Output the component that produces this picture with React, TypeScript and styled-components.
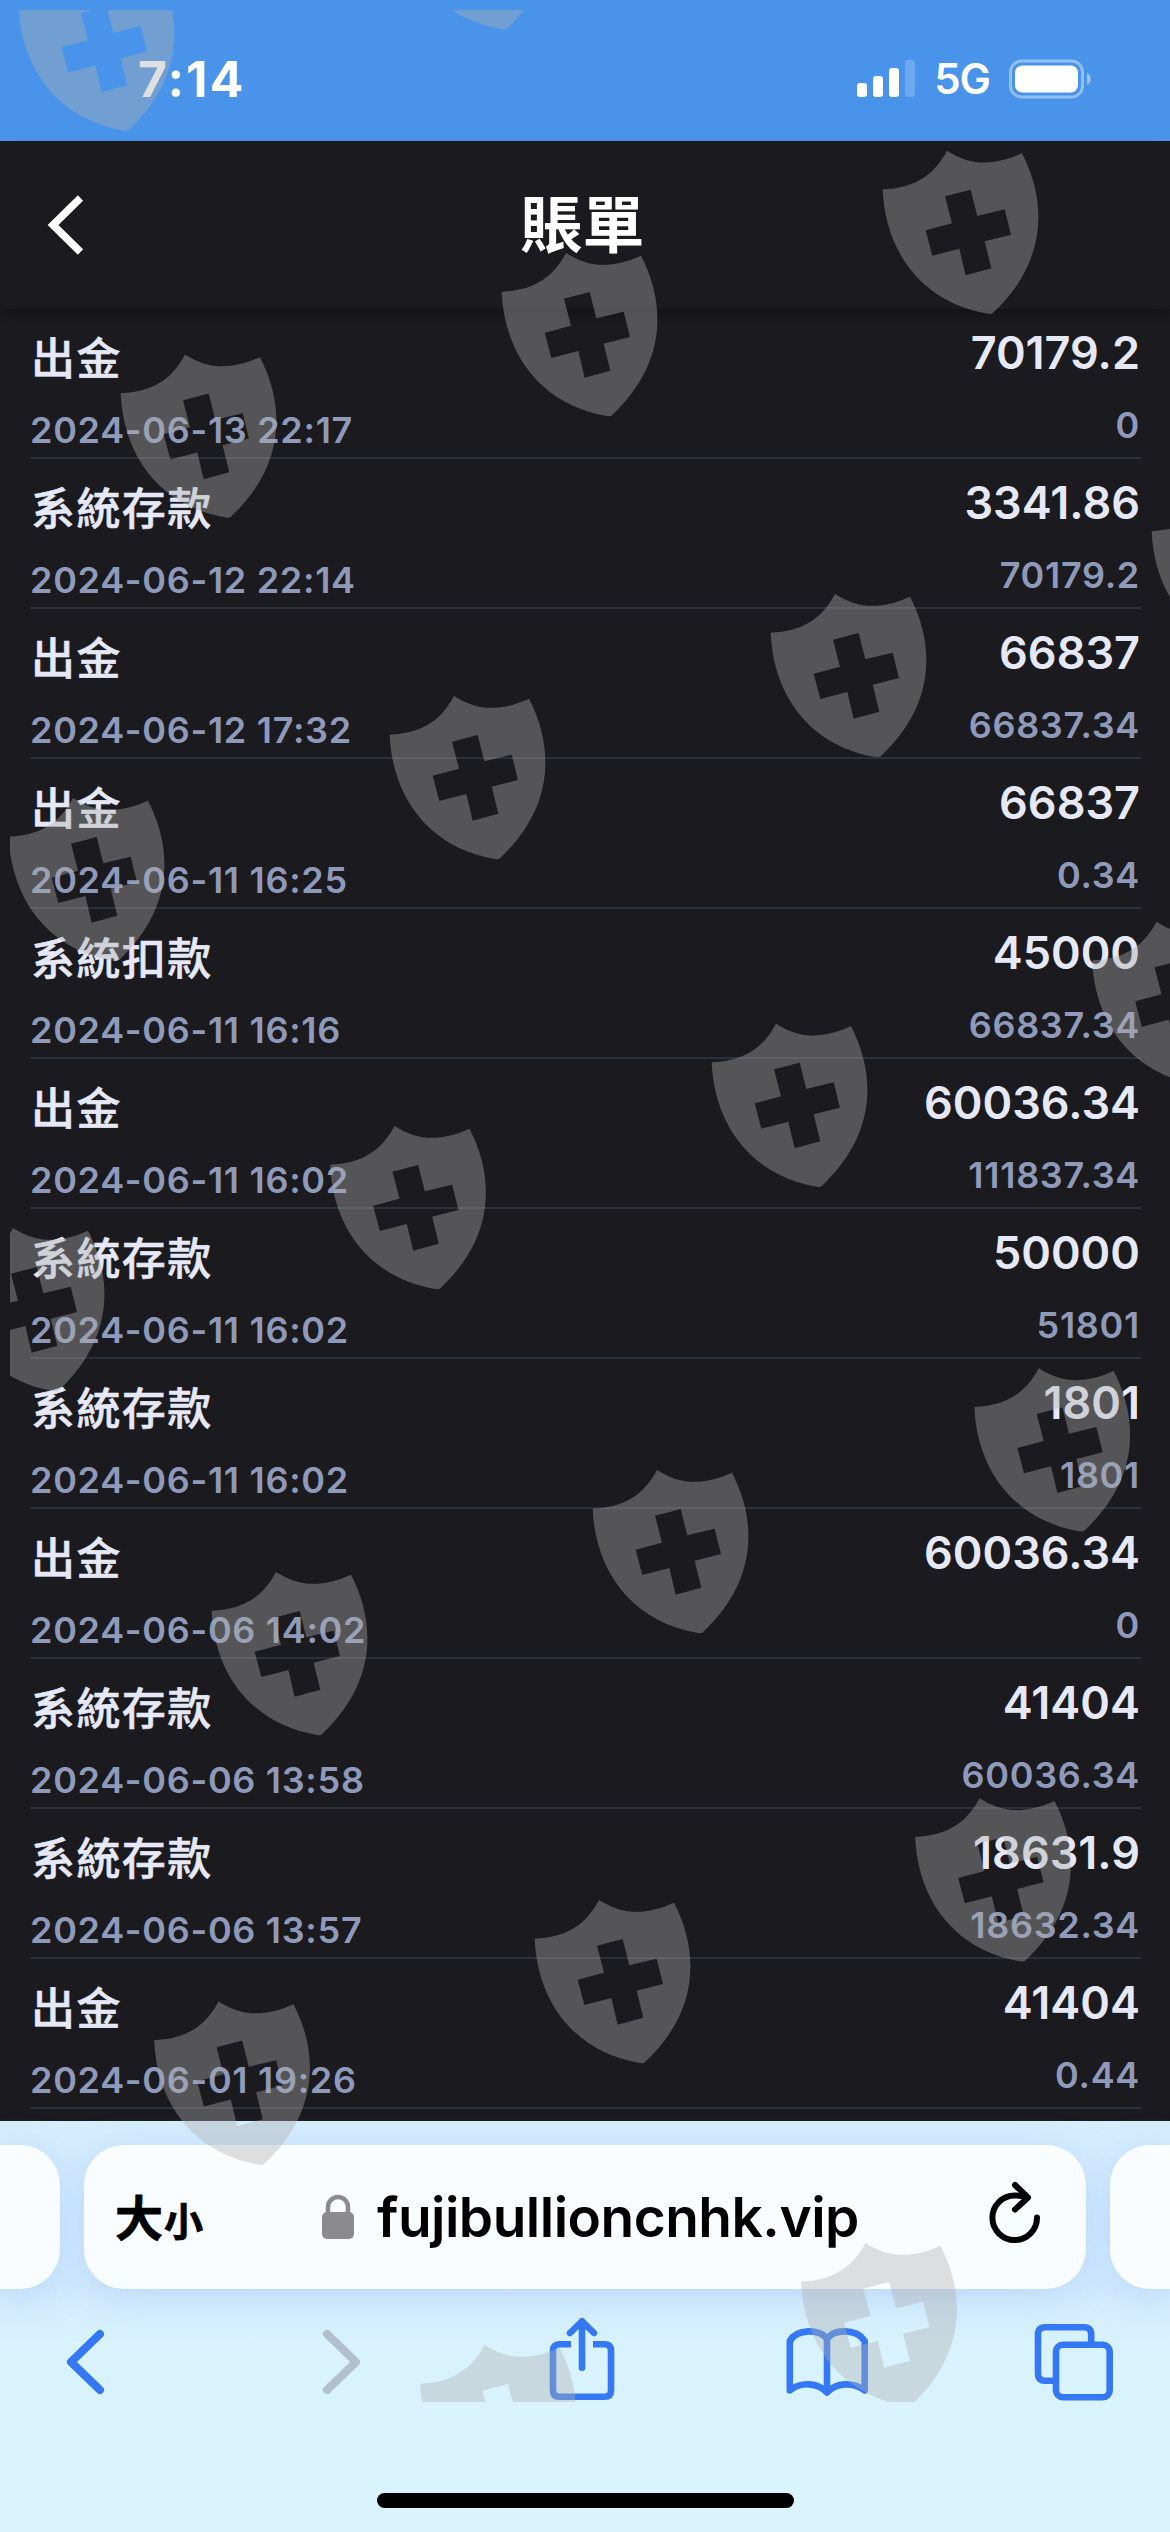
import styled, { createGlobalStyle } from "styled-components";

const colors = {
  STATUS_BLUE: "#4994ea",
  PAGE: "#1a1a1f",
  WHITE: "#ffffff",
  TEXT: "#e6e9f5",
  MUTED: "#8f9aba",
  LINE: "#2a313a",
  LINK: "#3478f6",
  DISABLED: "#b1bfce",
  CARD: "#fafdff",
};

const fonts = {
  latin: `Inter, "Noto Sans CJK TC", sans-serif`,
  cjk: `"Noto Sans CJK TC", Inter, sans-serif`,
};

const GlobalStyle = createGlobalStyle`
  * {
    box-sizing: border-box;
  }
  body {
    margin: 0;
    background-color: ${colors.PAGE};
  }
`;

const S = {
  Screen: styled.div`
    position: relative;
    display: flex;
    flex-direction: column;
    width: 1170px;
    height: 2532px;
    overflow: hidden;
    background-color: ${colors.PAGE};
    font-family: ${fonts.latin};
  `,
  StatusBar: styled.div`
    display: flex;
    align-items: center;
    justify-content: space-between;
    flex: none;
    height: 141px;
    padding: 16px 78px 0 138px;
    background-color: ${colors.STATUS_BLUE};
    color: ${colors.WHITE};
  `,
  Time: styled.span`
    font-size: 50px;
    line-height: 60px;
    font-weight: 700;
    letter-spacing: 2px;
  `,
  StatusIcons: styled.div`
    display: flex;
    align-items: center;
    gap: 19px;
  `,
  Network: styled.span`
    font-size: 42px;
    line-height: 48px;
    font-weight: 600;
    letter-spacing: -1px;
    padding-top: 1px;
  `,
  Header: styled.header`
    position: relative;
    z-index: 1;
    display: grid;
    grid-template-columns: 100px 1fr 105px;
    align-items: center;
    flex: none;
    height: 168px;
    background-color: ${colors.PAGE};
    box-shadow: 0 6px 12px -2px rgba(0, 0, 0, 0.3);
  `,
  BackButton: styled.button`
    display: flex;
    padding: 0 0 0 44px;
    border: 0;
    background: none;
  `,
  Title: styled.h1`
    margin: 0;
    padding-bottom: 9px;
    text-align: center;
    color: ${colors.WHITE};
    font-family: ${fonts.cjk};
    font-size: 62px;
    line-height: 90px;
    font-weight: 700;
  `,
  List: styled.ul`
    flex: none;
    height: 1812px;
    margin: 0;
    padding: 0 29px 0 30px;
    list-style: none;
  `,
  Row: styled.li`
    display: flex;
    justify-content: space-between;
    height: 150px;
    border-bottom: 2px solid ${colors.LINE};
  `,
  Info: styled.div`
    display: flex;
    flex-direction: column;
    gap: 25px;
    padding-top: 20px;
  `,
  Kind: styled.span`
    padding-left: 1px;
    color: ${colors.TEXT};
    font-family: ${fonts.cjk};
    font-size: 44px;
    line-height: 54px;
    font-weight: 500;
    letter-spacing: 1.4px;
    -webkit-text-stroke: 0.5px currentColor;
  `,
  Values: styled.div`
    display: flex;
    flex-direction: column;
    align-items: flex-end;
    gap: 23px;
    padding-top: 17px;
    padding-right: 1px;
  `,
  Amount: styled.span`
    color: ${colors.TEXT};
    font-size: 45px;
    line-height: 54px;
    font-weight: 600;
  `,
  Small: styled.span`
    color: ${colors.MUTED};
    font-size: 36px;
    line-height: 44px;
    font-weight: 560;
    letter-spacing: 0.7px;
  `,
  Browser: styled.footer`
    display: flex;
    flex-direction: column;
    flex: 1;
    padding-top: 24px;
    background: linear-gradient(#d5eefe, #d2ebfe 40%, #d8f3fe 55%, #daf4fe);
  `,
  Tabs: styled.div`
    display: grid;
    grid-template-columns: 60px 1002px 60px;
    gap: 24px;
    height: 144px;
  `,
  Tab: styled.div<{ $side?: "left" | "right" }>`
    display: flex;
    align-items: center;
    padding: ${({ $side }) => ($side ? "0" : "0 44px 0 31px")};
    border-radius: ${({ $side }) =>
      $side === "left" ? "0 40px 40px 0" : $side === "right" ? "40px 0 0 40px" : "40px"};
    background-color: ${colors.CARD};
    box-shadow: 0 6px 36px rgba(150, 180, 245, 0.36);
  `,
  TextSize: styled.span`
    display: flex;
    align-items: baseline;
    width: 92px;
    font-family: ${fonts.cjk};
    font-size: 48px;
    line-height: 60px;
    font-weight: 700;
    -webkit-text-stroke: 0.8px #000;
    small {
      margin-left: 1px;
      font-size: 39px;
    }
  `,
  Address: styled.div`
    display: flex;
    align-items: center;
    gap: 22px;
    margin-left: 114px;
    flex: 1;
    color: #000;
    font-size: 55px;
    line-height: 66px;
    font-weight: 580;
    letter-spacing: -0.5px;
  `,
  Reload: styled.svg`
    margin-bottom: 12px;
  `,
  Toolbar: styled.nav`
    display: grid;
    grid-template-columns: 255px 231px 239px 245px 84px;
    align-items: center;
    height: 116px;
    margin-top: 15px;
    padding-left: 60px;
    color: ${colors.LINK};
  `,
  HomeIndicator: styled.div`
    width: 417px;
    height: 15px;
    margin: 73px auto 0;
    border-radius: 8px;
    background-color: #000;
  `,
  // Sits above everything, starts 10px in from the top-left corner
  Watermark: styled.div`
    position: absolute;
    z-index: 2;
    top: 10px;
    left: 10px;
    right: 0;
    bottom: 130px;
    overflow: hidden;
    pointer-events: none;
    svg {
      display: block;
    }
  `,
};

const records = [
  { kind: "出金", date: "2024-06-13 22:17", amount: "70179.2", balance: "0" },
  { kind: "系統存款", date: "2024-06-12 22:14", amount: "3341.86", balance: "70179.2" },
  { kind: "出金", date: "2024-06-12 17:32", amount: "66837", balance: "66837.34" },
  { kind: "出金", date: "2024-06-11 16:25", amount: "66837", balance: "0.34" },
  { kind: "系統扣款", date: "2024-06-11 16:16", amount: "45000", balance: "66837.34" },
  { kind: "出金", date: "2024-06-11 16:02", amount: "60036.34", balance: "111837.34" },
  { kind: "系統存款", date: "2024-06-11 16:02", amount: "50000", balance: "51801" },
  { kind: "系統存款", date: "2024-06-11 16:02", amount: "1801", balance: "1801" },
  { kind: "出金", date: "2024-06-06 14:02", amount: "60036.34", balance: "0" },
  { kind: "系統存款", date: "2024-06-06 13:58", amount: "41404", balance: "60036.34" },
  { kind: "系統存款", date: "2024-06-06 13:57", amount: "18631.9", balance: "18632.34" },
  { kind: "出金", date: "2024-06-01 19:26", amount: "41404", balance: "0.44" },
];

const shields = [
  [83, -32.5],
  [461, -134],
  [947, 150.7],
  [566, 253],
  [185, 354.5],
  [1216, 492.5],
  [835, 594],
  [454, 696],
  [73, 798],
  [1156.5, 921.7],
  [776, 1023.7],
  [394.5, 1126],
  [13, 1228],
  [1038.7, 1368.3],
  [657, 1470],
  [276, 1572],
  [979.5, 1798.3],
  [599, 1900],
  [218.5, 2001.5],
  [865.5, 2243],
  [484.5, 2345],
];

function Watermark() {
  return (
    <S.Watermark>
      <svg width="1160" height="2392" viewBox="10 10 1160 2392" fill="rgba(176,176,174,0.4)">
        {shields.map(([x, y]) => (
          <path
            key={`${x}-${y}`}
            transform={`translate(${x} ${y}) scale(0.3333) translate(-261 -62)`}
            fillRule="evenodd"
            d="M68 178C160 174 220 140 261 62C335 110 405 106 486 70C564 220 560 400 396 551L388 552C190 520 76 370 68 178ZM255 199L276 280L197 301L217 377L298 356L317 436L394 415L374 334L453 314L434 238L352 258L332 179Z"
          />
        ))}
      </svg>
    </S.Watermark>
  );
}

function Signal() {
  return (
    <svg width="58" height="40" viewBox="0 0 58 40" fill="#fff">
      <rect x="0" y="24" width="10" height="14" rx="3" />
      <rect x="16" y="17" width="10" height="21" rx="3" />
      <rect x="32" y="9" width="10" height="29" rx="3" />
      <rect x="48" y="1" width="10" height="37" rx="3" opacity="0.2" />
    </svg>
  );
}

function Battery() {
  return (
    <svg width="83" height="40" viewBox="0 0 83 40" fill="#fff">
      <rect x="1.5" y="2" width="72" height="36" rx="11" fill="none" stroke="#fff" strokeOpacity="0.4" strokeWidth="3" />
      <rect x="6" y="6.5" width="63" height="27" rx="7" />
      <path d="M78 14c5 2 5 10 0 12z" opacity="0.45" />
    </svg>
  );
}

function Toolbar() {
  return (
    <S.Toolbar>
      <svg width="52" height="80" viewBox="0 0 52 80" fill="none" stroke="currentColor" strokeWidth="8" strokeLinecap="round" strokeLinejoin="round">
        <path d="M40 12L11 40L40 68" />
      </svg>
      <svg width="52" height="80" viewBox="0 0 52 80" fill="none" stroke={colors.DISABLED} strokeWidth="8" strokeLinecap="round" strokeLinejoin="round">
        <path d="M12 12L41 40L12 68" />
      </svg>
      <svg width="72" height="92" viewBox="0 0 72 92" fill="none" stroke="currentColor" strokeWidth="6.6" strokeLinecap="round" strokeLinejoin="round">
        <path d="M36 51.700V5.300M24 17L36 5.300L48 17" />
        <path
          strokeLinecap="butt"
          d="M25 28.300H13.500Q7 28.300 7 34.800V74.200Q7 80.700 13.500 80.700H58.500Q65 80.700 65 74.200V34.800Q65 28.300 58.500 28.300H47"
        />
      </svg>
      <svg width="84" height="84" viewBox="0 0 84 84" fill="none" stroke="currentColor" strokeWidth="6.6" strokeLinecap="round" strokeLinejoin="round">
        <path d="M42 19C35 8.500 12 8.500 4.800 21V70.500C16 61.500 33 62.500 42 72.500C51 62.500 68 61.500 79.700 70.500V21C72 8.500 49 8.500 42 19V72" />
      </svg>
      <svg width="84" height="84" viewBox="0 0 84 84" fill="none" stroke="currentColor" strokeWidth="6.6">
        <rect x="26" y="24.800" width="53.700" height="52.400" rx="7" />
        <path d="M61.200 24.800V14.300Q61.200 7.300 54.200 7.300H15Q8 7.300 8 14.300V53.700Q8 60.700 15 60.700H26" />
      </svg>
    </S.Toolbar>
  );
}

function App() {
  return (
    <S.Screen>
      <GlobalStyle />
      <S.StatusBar>
        <S.Time>7:14</S.Time>
        <S.StatusIcons>
          <Signal />
          <S.Network>5G</S.Network>
          <Battery />
        </S.StatusIcons>
      </S.StatusBar>
      <S.Header>
        <S.BackButton aria-label="back">
          <svg width="44" height="64" viewBox="0 0 44 64" fill="none" stroke="#fff" strokeWidth="7.5">
            <path d="M36.500 5L9 32L36.500 59" />
          </svg>
        </S.BackButton>
        <S.Title>賬單</S.Title>
      </S.Header>
      <S.List>
        {records.map(({ kind, date, amount, balance }) => (
          <S.Row key={date + amount}>
            <S.Info>
              <S.Kind>{kind}</S.Kind>
              <S.Small>{date}</S.Small>
            </S.Info>
            <S.Values>
              <S.Amount>{amount}</S.Amount>
              <S.Small>{balance}</S.Small>
            </S.Values>
          </S.Row>
        ))}
      </S.List>
      <S.Browser>
        <S.Tabs>
          <S.Tab $side="left" />
          <S.Tab>
            <S.TextSize>
              大<small>小</small>
            </S.TextSize>
            <S.Address>
              <svg width="34" height="46" viewBox="0 0 34 46">
                <rect x="1" y="18" width="32" height="27" rx="5" fill="#8a8a8f" />
                <path d="M7 20V13a10 10 0 0 1 20 0V20" fill="none" stroke="#8a8a8f" strokeWidth="4.5" />
              </svg>
              fujibullioncnhk.vip
            </S.Address>
            <S.Reload width="54" height="66" viewBox="0 0 54 66" fill="none" stroke="#000" strokeWidth="6" strokeLinecap="round" strokeLinejoin="round">
              <path d="M49 39.500A22.300 22.300 0 1 1 27 17.500Q34 17.500 39 19" />
              <path d="M27 7L40 19.500L27 31.500" />
            </S.Reload>
          </S.Tab>
          <S.Tab $side="right" />
        </S.Tabs>
        <Toolbar />
        <S.HomeIndicator />
      </S.Browser>
      <Watermark />
    </S.Screen>
  );
}

export default App;
